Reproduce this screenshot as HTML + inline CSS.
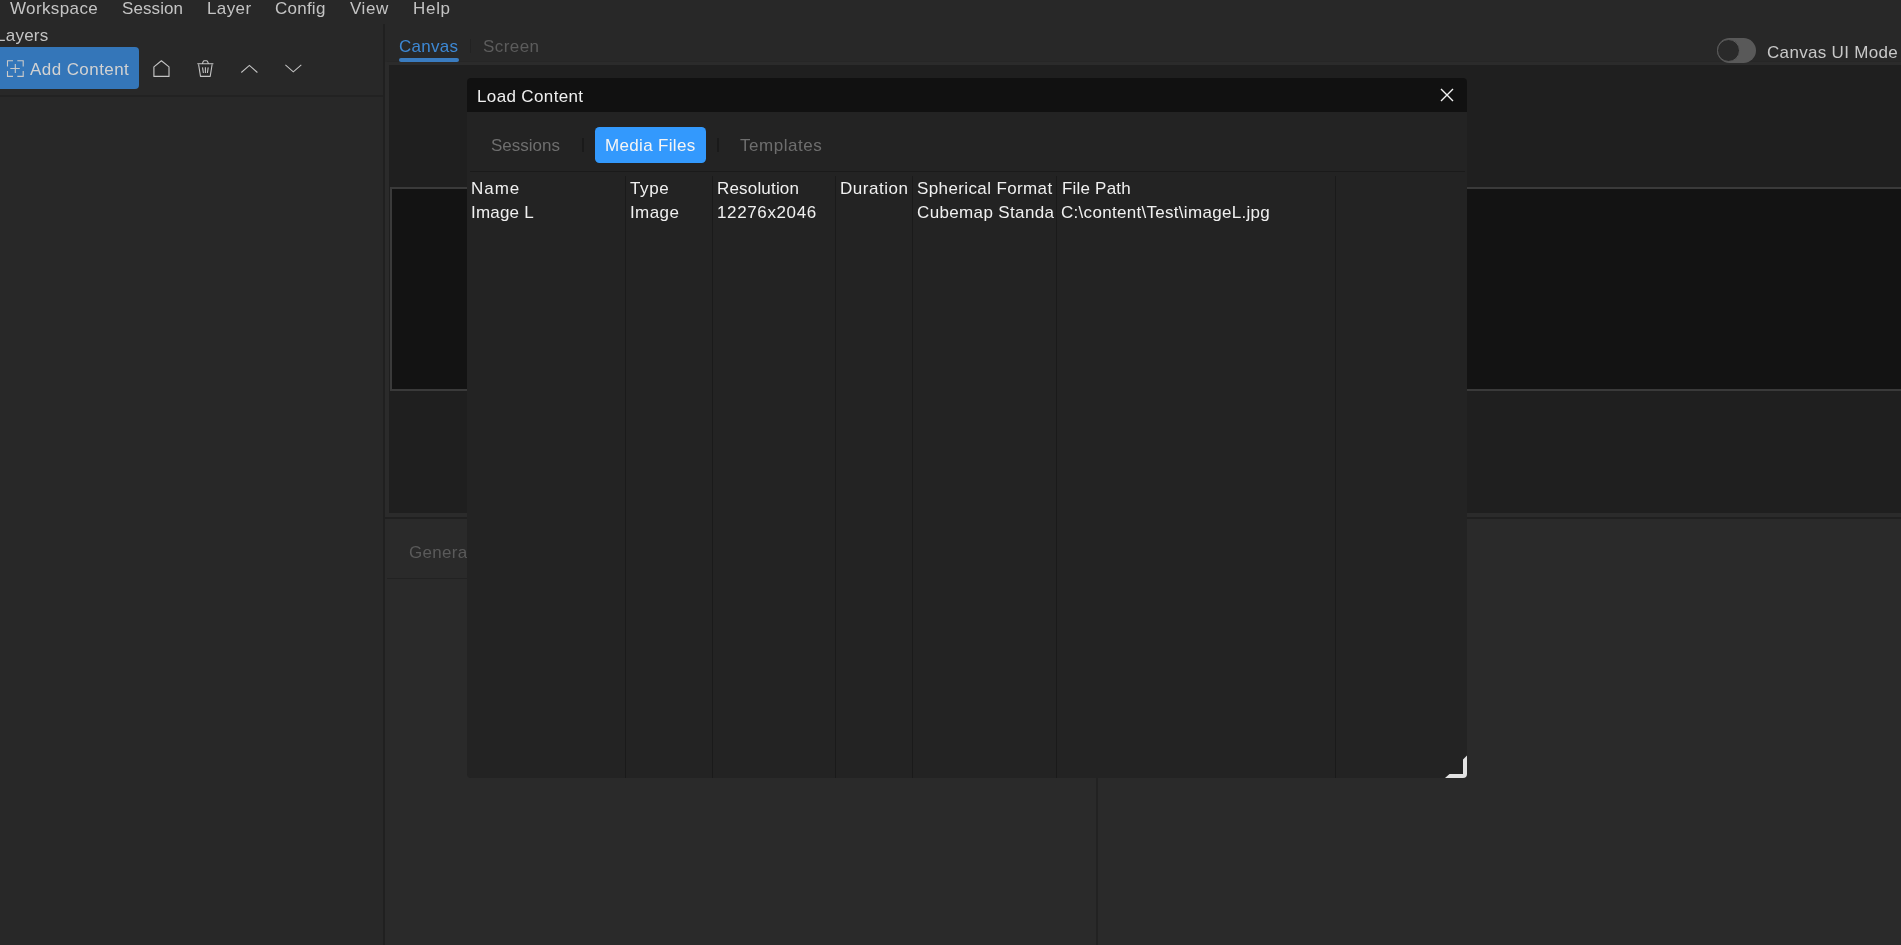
<!DOCTYPE html>
<html><head><meta charset="utf-8"><style>
html,body{margin:0;padding:0;width:1901px;height:945px;overflow:hidden;background:#282828;}
.t{position:absolute;white-space:nowrap;will-change:transform;font-family:"Liberation Sans",sans-serif;}
.r{position:absolute;}
svg{position:absolute;left:0;top:0;}
</style></head><body>
<div class="r" style="left:383px;top:24px;width:2px;height:921px;background:#202020;"></div>
<div class="r" style="left:385px;top:24px;width:1516px;height:921px;background:#2b2b2b;"></div>
<div class="r" style="left:385px;top:24px;width:1516px;height:38px;background:#282828;"></div>
<div class="r" style="left:387px;top:61px;width:1514px;height:1px;background:#262626;"></div>
<div class="r" style="left:389px;top:65px;width:1512px;height:448px;background:#1f1f1f;"></div>
<div class="r" style="left:390px;top:187px;width:1511px;height:204px;background:#3a3a3a;"></div>
<div class="r" style="left:392px;top:189px;width:1509px;height:200px;background:#131313;"></div>
<div class="r" style="left:385px;top:517px;width:1516px;height:2px;background:#202020;"></div>
<div class="r" style="left:385px;top:519px;width:1516px;height:426px;background:#2a2a2a;"></div>
<div class="r" style="left:387px;top:578px;width:80px;height:1px;background:#222222;"></div>
<div class="r" style="left:1096px;top:778px;width:2px;height:167px;background:#222222;"></div>
<div class="r" style="left:0px;top:95px;width:383px;height:2px;background:#222222;"></div>
<div class="r" style="left:0px;top:47px;width:139px;height:42px;background:#3476b9;border-radius:0 4px 4px 0;"></div>
<div class="r" style="left:399px;top:58px;width:60px;height:4px;background:#3a7cc0;border-radius:2px;"></div>
<div class="r" style="left:470px;top:39px;width:1px;height:14px;background:#222222;"></div>
<div class="r" style="left:1717px;top:38px;width:39px;height:25px;background:#595959;border-radius:13px;"></div>
<div class="r" style="left:1717px;top:38.7px;width:23.3px;height:23.3px;background:#2a2a2a;border-radius:50%;box-sizing:border-box;border:1.3px solid #5c5c5c;"></div>
<div class="t" style="left:9.5px;top:-0.39px;font-size:17px;line-height:17px;color:#c4c4c4;letter-spacing:0.375px;">Workspace</div>
<div class="t" style="left:121.5px;top:-0.39px;font-size:17px;line-height:17px;color:#c4c4c4;letter-spacing:0.084px;">Session</div>
<div class="t" style="left:206.6px;top:-0.39px;font-size:17px;line-height:17px;color:#c4c4c4;letter-spacing:0.4px;">Layer</div>
<div class="t" style="left:275.2px;top:-0.39px;font-size:17px;line-height:17px;color:#c4c4c4;letter-spacing:0.24px;">Config</div>
<div class="t" style="left:350.2px;top:-0.39px;font-size:17px;line-height:17px;color:#c4c4c4;letter-spacing:0.567px;">View</div>
<div class="t" style="left:412.7px;top:-0.39px;font-size:17px;line-height:17px;color:#c4c4c4;letter-spacing:0.7px;">Help</div>
<div class="t" style="left:-4.4px;top:26.61px;font-size:17px;line-height:17px;color:#c4c4c4;letter-spacing:0.25px;">Layers</div>
<div class="t" style="left:29.75px;top:60.61px;font-size:17px;line-height:17px;color:#d2d2d2;letter-spacing:0.425px;">Add Content</div>
<div class="t" style="left:398.9px;top:37.61px;font-size:17px;line-height:17px;color:#3d88d4;letter-spacing:0.28px;">Canvas</div>
<div class="t" style="left:482.5px;top:37.61px;font-size:17px;line-height:17px;color:#5c5c5c;letter-spacing:0.42px;">Screen</div>
<div class="t" style="left:1766.95px;top:43.61px;font-size:17px;line-height:17px;color:#c8c8c8;letter-spacing:0.323px;">Canvas UI Mode</div>
<div class="t" style="left:408.7px;top:543.61px;font-size:17px;line-height:17px;color:#5a5a5a;letter-spacing:0.3px;">Genera</div>
<div class="r" style="left:467px;top:78px;width:1000px;height:700px;background:#232323;border-radius:4px;"></div>
<div class="r" style="left:467px;top:78px;width:1000px;height:34px;background:#111111;border-radius:4px 4px 0 0;"></div>
<div class="r" style="left:582px;top:138px;width:2px;height:14px;background:#1a1a1a;"></div>
<div class="r" style="left:717px;top:138px;width:2px;height:14px;background:#1a1a1a;"></div>
<div class="r" style="left:595px;top:127px;width:111px;height:36px;background:#3399fd;border-radius:4.5px;"></div>
<div class="r" style="left:470px;top:171px;width:995px;height:1px;background:#1a1a1a;"></div>
<div class="r" style="left:625px;top:176px;width:1px;height:602px;background:#1a1a1a;"></div>
<div class="r" style="left:712px;top:176px;width:1px;height:602px;background:#1a1a1a;"></div>
<div class="r" style="left:835px;top:176px;width:1px;height:602px;background:#1a1a1a;"></div>
<div class="r" style="left:912px;top:176px;width:1px;height:602px;background:#1a1a1a;"></div>
<div class="r" style="left:1056px;top:176px;width:1px;height:602px;background:#1a1a1a;"></div>
<div class="r" style="left:1335px;top:176px;width:1px;height:602px;background:#1a1a1a;"></div>
<div class="t" style="left:476.9px;top:87.61px;font-size:17px;line-height:17px;color:#f0f0f0;letter-spacing:0.363px;">Load Content</div>
<div class="t" style="left:490.9px;top:136.61px;font-size:17px;line-height:17px;color:#6e6e6e;letter-spacing:0.0px;">Sessions</div>
<div class="t" style="left:604.8px;top:136.61px;font-size:17px;line-height:17px;color:#f5f5f5;letter-spacing:0.33px;">Media Files</div>
<div class="t" style="left:740.2px;top:136.61px;font-size:17px;line-height:17px;color:#6e6e6e;letter-spacing:0.524px;">Templates</div>
<div class="t" style="left:471.3px;top:179.61px;font-size:17px;line-height:17px;color:#f0f0f0;letter-spacing:0.967px;">Name</div>
<div class="t" style="left:630.0px;top:179.61px;font-size:17px;line-height:17px;color:#f0f0f0;letter-spacing:0.634px;">Type</div>
<div class="t" style="left:717.2px;top:179.61px;font-size:17px;line-height:17px;color:#f0f0f0;letter-spacing:0.178px;">Resolution</div>
<div class="t" style="left:840.1px;top:179.61px;font-size:17px;line-height:17px;color:#f0f0f0;letter-spacing:0.543px;">Duration</div>
<div class="t" style="left:917.4px;top:179.61px;font-size:17px;line-height:17px;color:#f0f0f0;letter-spacing:0.38px;">Spherical Format</div>
<div class="t" style="left:1061.6px;top:179.61px;font-size:17px;line-height:17px;color:#f0f0f0;letter-spacing:0.2px;">File Path</div>
<div class="t" style="left:470.8px;top:203.61px;font-size:17px;line-height:17px;color:#f0f0f0;letter-spacing:0.2px;">Image L</div>
<div class="t" style="left:629.7px;top:203.61px;font-size:17px;line-height:17px;color:#f0f0f0;letter-spacing:0.4px;">Image</div>
<div class="t" style="left:717.2px;top:203.61px;font-size:17px;line-height:17px;color:#f0f0f0;letter-spacing:0.622px;">12276x2046</div>
<div class="t" style="left:917.4px;top:203.61px;font-size:17px;line-height:17px;color:#f0f0f0;letter-spacing:0.361px;">Cubemap Standa</div>
<div class="t" style="left:1061.3px;top:203.61px;font-size:17px;line-height:17px;color:#f0f0f0;letter-spacing:0.296px;">C:&#92;content&#92;Test&#92;imageL.jpg</div>
<svg width="1901" height="945" viewBox="0 0 1901 945" fill="none">
<path d="M7.5 66.4V60.7H13M17.3 60.7H23.2V66.4M23.2 70.9V76.4H17.3M13 76.4H7.5V70.9M10.3 68.5H19.8M15.3 64V73" stroke="#cacaca" stroke-width="1.1"/>
<path d="M153.9 66.9L161.4 60.8L169 66.9V76.4H153.9Z" stroke="#c4c4c4" stroke-width="1.15" stroke-linejoin="round"/>
<path d="M197.3 63.8H213.4M202.3 63.8L203.2 61.6Q203.6 60.8 204.4 60.8H206.4Q207.2 60.8 207.6 61.6L208.5 63.8M198.6 64.5L200.5 76.4H210.2L212.1 64.5M202.5 67.3L203.4 73M205.4 67.3V73M208.2 67.3L207.4 73" stroke="#c4c4c4" stroke-width="1.1" stroke-linejoin="round"/>
<path d="M241.3 72.5L249.4 65.4L257.4 72.5" stroke="#c4c4c4" stroke-width="1.05"/>
<path d="M285.4 64.8L293.3 71.8L301.3 64.8" stroke="#c4c4c4" stroke-width="1.05"/>
<path d="M1441 89.1L1453 101.1M1453 89.1L1441 101.1" stroke="#f4f4f4" stroke-width="1.4"/>
<path d="M1467 755.5V774Q1467 778 1463 778H1445L1449.5 774H1463V759.5Z" fill="#e2e2e2"/>
</svg>

</body></html>
